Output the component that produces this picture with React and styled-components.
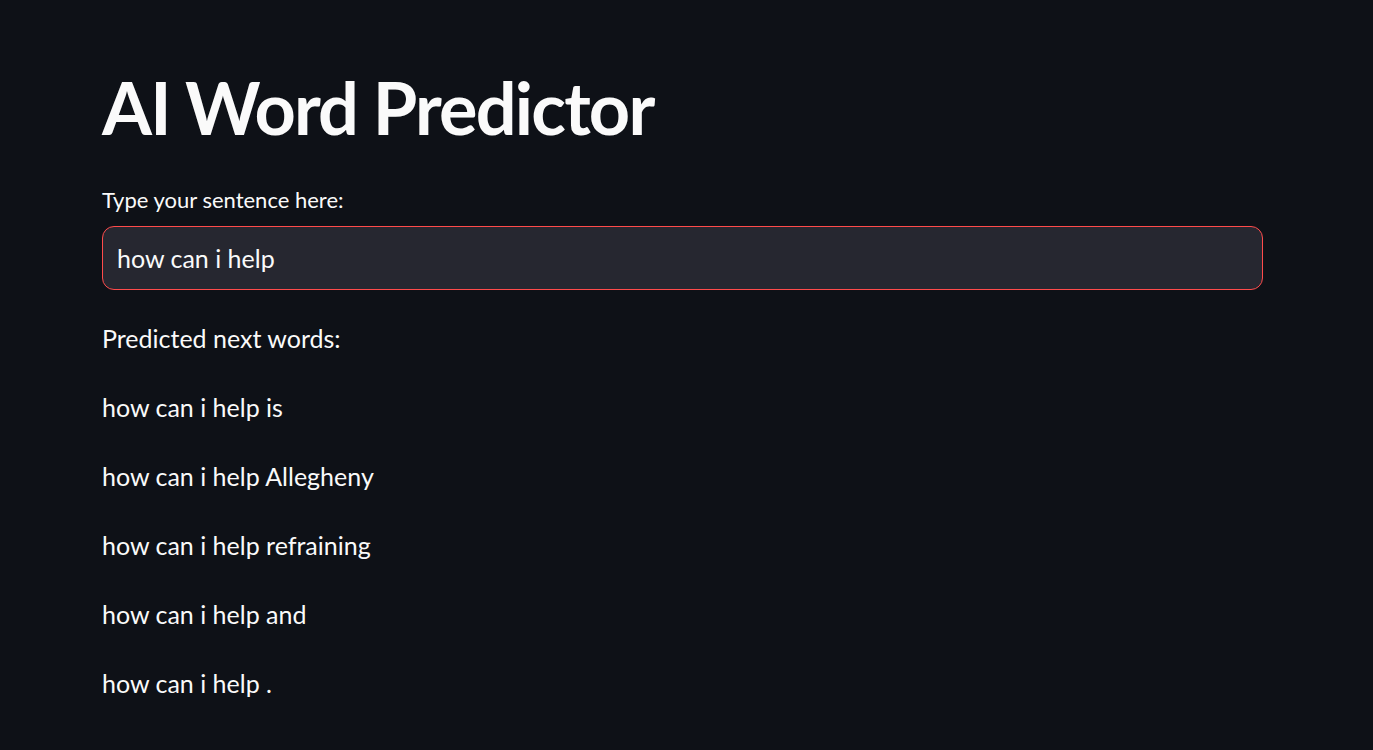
import React from 'react'
import styled, { createGlobalStyle } from 'styled-components'

const GlobalStyle = createGlobalStyle`
    body {
        margin: 0;
        background-color: #0e1117;
        color: #fafafa;
        font-family: Lato, "Noto Sans", sans-serif;
    }
`;
const Main = styled.main`
    width: 1161px;
    padding: 64px 0 40px 102px;
`;
const Title = styled.h1`
    margin: 0 0 36px 0;
    font-size: 72px;
    font-weight: 700;
    line-height: 1.2;
    letter-spacing: -1.8px;
`;
const Label = styled.label`
    display: block;
    font-size: 22px;
    line-height: 28px;
    margin-bottom: 12px;
`;
const Input = styled.input`
    box-sizing: border-box;
    width: 100%;
    height: 64px;
    padding: 0 14px;
    background-color: #262730;
    border: 1px solid #ff4b4b;
    border-radius: 12px;
    color: #fafafa;
    font-family: inherit;
    font-size: 25px;
    outline: none;
`;
const Text = styled.p`
    margin: 0 0 27px 0;
    font-size: 25px;
    line-height: 42px;
`;
const Output = styled.div`
    margin-top: 27px;
`;

const predictions = ["is", "Allegheny", "refraining", "and", "."];

const App = () => {
    const sentence = "how can i help";
    return (
        <Main>
            <GlobalStyle />
            <Title>AI Word Predictor</Title>
            <Label>Type your sentence here:</Label>
            <Input defaultValue={sentence} />
            <Output>
                <Text>Predicted next words:</Text>
                {predictions.map((word) => (
                    <Text key={word}>{sentence} {word}</Text>
                ))}
            </Output>
        </Main>
    )
}

export default App;
